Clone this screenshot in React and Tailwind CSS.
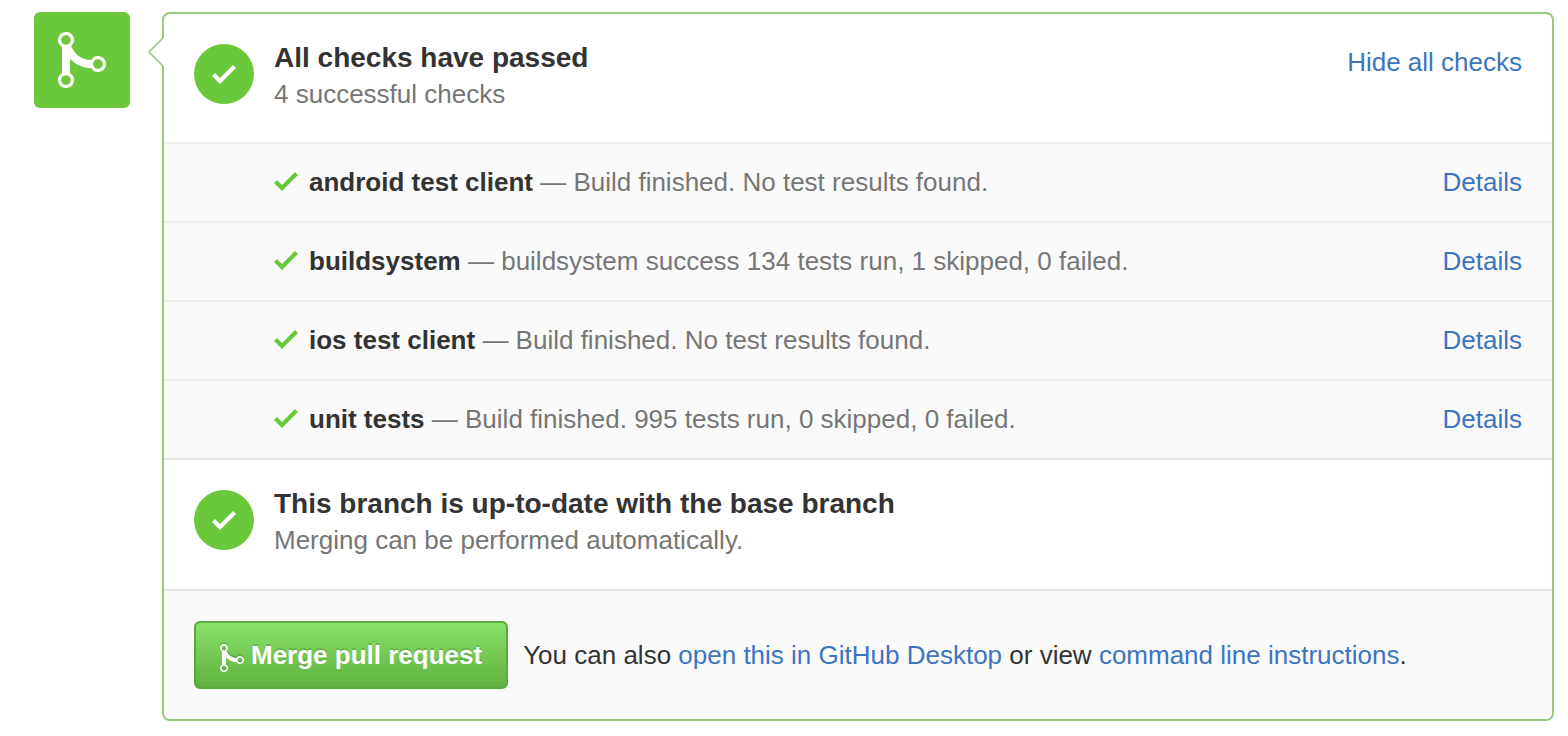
const checks = [
  { name: 'android test client', summary: 'Build finished. No test results found.' },
  { name: 'buildsystem', summary: 'buildsystem success 134 tests run, 1 skipped, 0 failed.' },
  { name: 'ios test client', summary: 'Build finished. No test results found.' },
  { name: 'unit tests', summary: 'Build finished. 995 tests run, 0 skipped, 0 failed.' },
];

function MergeIcon({ className }) {
  return (
    <svg viewBox="0 0 12 16" fill="currentColor" aria-hidden="true" className={className}>
      <path
        fillRule="evenodd"
        d="M10 7c-.73 0-1.38.41-1.73 1.02V8C7.22 7.98 6 7.64 5.14 6.98c-.75-.58-1.5-1.61-1.89-2.44A1.993 1.993 0 0 0 2 .99C.89.99 0 1.89 0 3a2 2 0 0 0 1 1.72v6.56c-.59.35-1 .99-1 1.72 0 1.11.89 2 2 2a1.993 1.993 0 0 0 1-3.72V7.67c.67.7 1.44 1.27 2.3 1.69.86.42 2.03.63 2.97.64v-.02c.36.61 1 1.02 1.73 1.02 1.11 0 2-.89 2-2 0-1.11-.89-2-2-2zm-6.8 6c0 .66-.55 1.2-1.2 1.2-.65 0-1.2-.55-1.2-1.2 0-.65.55-1.2 1.2-1.2.65 0 1.2.55 1.2 1.2zM2 4.2C1.34 4.2.8 3.65.8 3c0-.65.55-1.2 1.2-1.2.65 0 1.2.55 1.2 1.2 0 .65-.55 1.2-1.2 1.2zm8 6c-.66 0-1.2-.55-1.2-1.2 0-.65.55-1.2 1.2-1.2.65 0 1.2.55 1.2 1.2 0 .65-.55 1.2-1.2 1.2z"
      />
    </svg>
  );
}

function CheckIcon({ className }) {
  return (
    <svg viewBox="0 0 12 16" fill="currentColor" aria-hidden="true" className={className}>
      <path d="M12 5l-8 8-4-4 1.5-1.5L4 10l6.5-6.5L12 5z" />
    </svg>
  );
}

function Status({ title, detail, children }) {
  return (
    <div className="flex items-start gap-5">
      <span className="flex size-15 shrink-0 items-center justify-center rounded-full bg-[#69c93a] text-white">
        <CheckIcon className="h-8 w-6" />
      </span>
      <div className="min-w-0 grow">
        <h2 className="text-[28px]/[28px] font-bold text-[#333]">{title}</h2>
        <p className="pt-1 text-[26px]/[36px] text-[#767676]">{detail}</p>
      </div>
      {children}
    </div>
  );
}

function Link({ children }) {
  return (
    <a href="#" className="text-[#3d74c0] hover:underline">
      {children}
    </a>
  );
}

export default function App() {
  return (
    <main className="flex items-start gap-8 py-3 pr-3.5 pl-8.5 font-['Liberation_Sans',Arial,sans-serif] text-[26px]/[39px] text-[#333]">
      <div className="flex size-24 shrink-0 items-center justify-center rounded-md bg-[#69c93a] text-white">
        <MergeIcon className="h-16 w-12" />
      </div>

      <div className="relative min-w-0 grow rounded-lg border-2 border-[#94cb7d] bg-white">
        <svg viewBox="0 0 16 30" aria-hidden="true" className="absolute top-[23px] -left-4 h-[30px] w-4">
          <path d="M16 1 1 15l15 14z" fill="#fff" />
          <path d="M15 1 1 15l14 14" fill="none" stroke="#94cb7d" strokeWidth="1.6" />
        </svg>

        <section className="p-7.5">
          <Status title="All checks have passed" detail="4 successful checks">
            <span className="shrink-0 leading-9">
              <Link>Hide all checks</Link>
            </span>
          </Status>
        </section>

        <ul className="bg-[#fafafa]">
          {checks.map((check) => (
            <li key={check.name} className="flex items-start border-t-2 border-[#eee] py-[19px] pr-7.5 pl-[110px]">
              <CheckIcon className="mt-0.5 mr-[11px] h-8 w-6 shrink-0 text-[#69c93a]" />
              <p className="min-w-0 grow text-[#767676]">
                <strong className="font-bold text-[#333]">{check.name}</strong> — {check.summary}
              </p>
              <Link>Details</Link>
            </li>
          ))}
        </ul>

        <section className="border-t-2 border-[#e5e5e5] px-7.5 pt-7.5 pb-[31px]">
          <Status
            title="This branch is up-to-date with the base branch"
            detail="Merging can be performed automatically."
          />
        </section>

        <section className="flex items-center gap-[15px] rounded-b-md border-t-2 border-[#e5e5e5] bg-[#fafafa] p-7.5">
          <button
            type="button"
            className="flex shrink-0 items-start gap-[7px] rounded-md border-2 border-[#5aa93c] bg-linear-to-b from-[#8ae26a] to-[#5fb13d] px-6 py-3 leading-10 font-bold whitespace-nowrap text-white text-shadow-[0_-2px_0_rgb(0_0_0/0.15)]"
          >
            <MergeIcon className="mt-[7px] h-8 w-6 drop-shadow-[0_-2px_0_rgb(0_0_0/0.15)]" />
            Merge pull request
          </button>
          <p>
            You can also <Link>open this in GitHub Desktop</Link> or view <Link>command line instructions</Link>.
          </p>
        </section>
      </div>
    </main>
  );
}
